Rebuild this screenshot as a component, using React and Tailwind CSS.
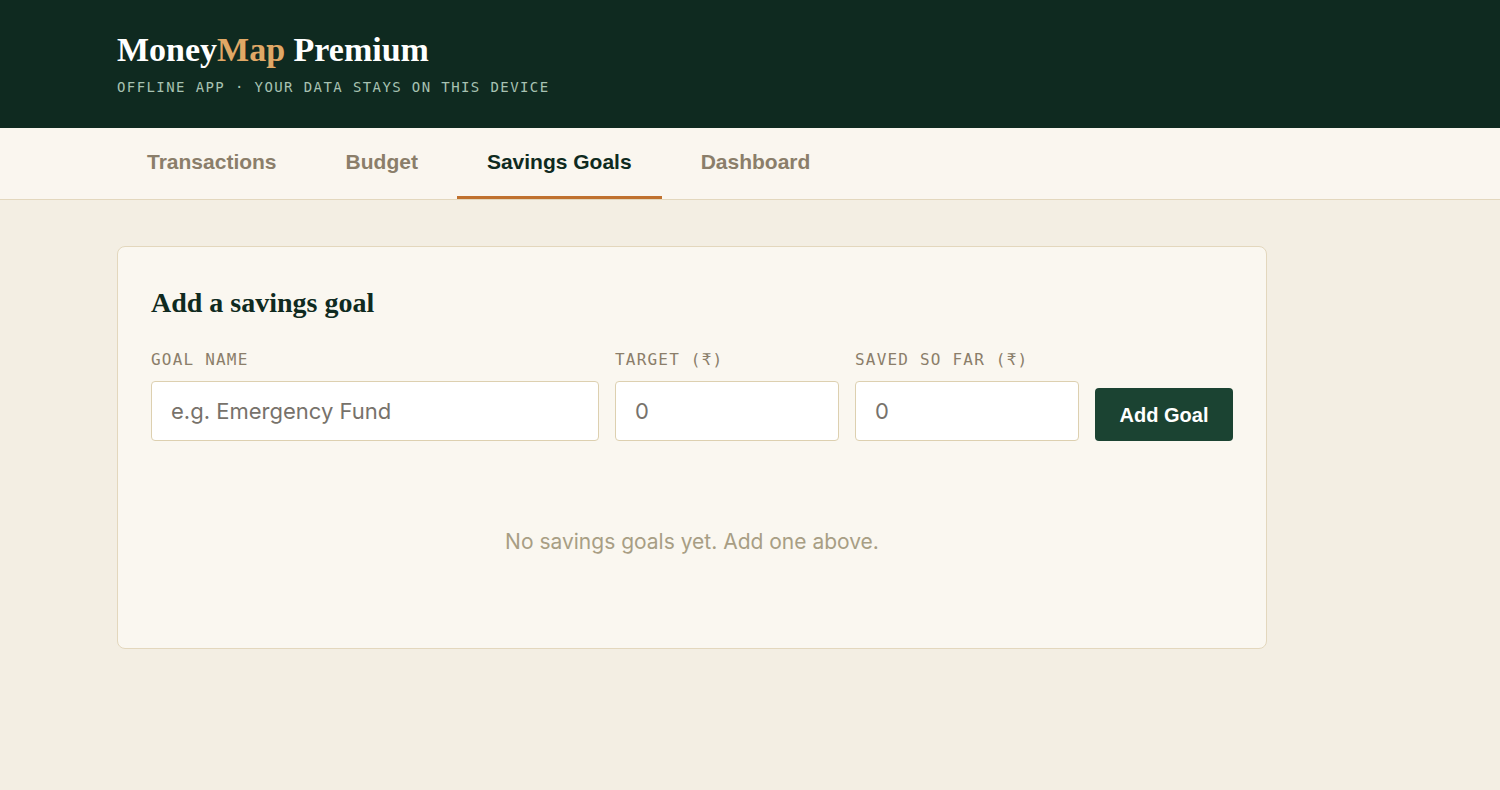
import { useState } from 'react';

const tabs = ['Transactions', 'Budget', 'Savings Goals', 'Dashboard'];

const labelCls = "font-['DejaVu_Sans_Mono',monospace] text-[16px] tracking-[1.2px] text-[#8b7e6a]";
const inputCls =
  "h-[60px] bg-white border border-[#ddd0b0] rounded-[4px] px-[19px] font-['Inter',sans-serif] text-[22px] text-[#2b2b2b] placeholder-[#77726b] outline-none";

function Field({ label, value, onChange, placeholder }) {
  return (
    <label className="flex flex-col gap-[9px]">
      <span className={labelCls}>{label}</span>
      <input value={value} onChange={(e) => onChange(e.target.value)} placeholder={placeholder} className={inputCls} />
    </label>
  );
}

export default function App() {
  const [active, setActive] = useState('Savings Goals');
  const [name, setName] = useState('');
  const [target, setTarget] = useState('');
  const [saved, setSaved] = useState('');

  return (
    <div className="min-h-screen bg-[#f3eee3] font-['Inter',sans-serif]">
      {/* Header */}
      <header className="bg-[#0f2a20] h-[128px] px-[117px] pt-[32px]">
        <h1 className="font-['Liberation_Serif',serif] text-[34px] leading-[36px] font-bold text-white">
          Money<span className="text-[#e0a866]">Map</span> Premium
        </h1>
        <p className="mt-[9px] font-['DejaVu_Sans_Mono',monospace] text-[14px] tracking-[1.4px] text-[#a7c2b2]">
          OFFLINE APP · YOUR DATA STAYS ON THIS DEVICE
        </p>
      </header>

      {/* Tabs */}
      <nav className="bg-[#faf6ef] border-b border-[#e3d7bd] px-[117px] flex gap-[9px]">
        {tabs.map((t) => {
          const isActive = t === active;
          return (
            <button
              key={t}
              type="button"
              onClick={() => setActive(t)}
              className={`h-[71px] px-[30px] font-['Liberation_Sans',Arial,sans-serif] text-[21px] font-bold border-b-[3px] ${
                isActive ? 'text-[#0f2a20] border-[#c0712e]' : 'text-[#8b7e6a] border-transparent'
              }`}
            >
              {t}
            </button>
          );
        })}
      </nav>

      {/* Goal form */}
      <main className="px-[117px] pt-[46px]">
        <section className="w-[1150px] h-[403px] bg-[#faf7f0] border border-[#e3d7bd] rounded-[8px] px-[33px] pt-[40px]">
          <h2 className="font-['Liberation_Serif',serif] text-[28px] leading-[32px] font-bold text-[#0f2a20]">
            Add a savings goal
          </h2>

          <div className="mt-[29px] grid grid-cols-[448px_224px_224px_138px] gap-x-[16px] items-end">
            <Field label="GOAL NAME" value={name} onChange={setName} placeholder="e.g. Emergency Fund" />
            <Field label="TARGET (₹)" value={target} onChange={setTarget} placeholder="0" />
            <Field label="SAVED SO FAR (₹)" value={saved} onChange={setSaved} placeholder="0" />
            <button
              type="button"
              className="h-[53px] bg-[#1b4332] text-white font-['Liberation_Sans',Arial,sans-serif] text-[20px] font-bold rounded-[4px]"
            >
              Add Goal
            </button>
          </div>

          <p className="mt-[85px] text-center text-[21px] text-[#a89e84]">
            No savings goals yet. Add one above.
          </p>
        </section>
      </main>
    </div>
  );
}
